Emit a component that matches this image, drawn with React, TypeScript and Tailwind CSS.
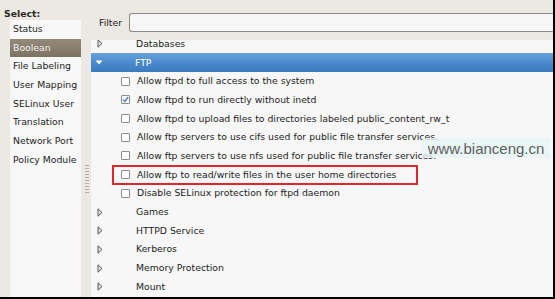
import React from 'react';

const pages = [
  'Status',
  'Boolean',
  'File Labeling',
  'User Mapping',
  'SELinux User',
  'Translation',
  'Network Port',
  'Policy Module',
];

type Row =
  | { kind: 'group'; label: string; open?: boolean; selected?: boolean }
  | { kind: 'bool'; label: string; checked?: boolean; marked?: boolean };

const rows: Row[] = [
  { kind: 'group', label: 'Databases' },
  { kind: 'group', label: 'FTP', open: true, selected: true },
  { kind: 'bool', label: 'Allow ftpd to full access to the system' },
  { kind: 'bool', label: 'Allow ftpd to run directly without inetd', checked: true },
  { kind: 'bool', label: 'Allow ftpd to upload files to directories labeled public_content_rw_t' },
  { kind: 'bool', label: 'Allow ftp servers to use cifs used for public file transfer services.' },
  { kind: 'bool', label: 'Allow ftp servers to use nfs used for public file transfer services.' },
  { kind: 'bool', label: 'Allow ftp to read/write files in the user home directories', marked: true },
  { kind: 'bool', label: 'Disable SELinux protection for ftpd daemon' },
  { kind: 'group', label: 'Games' },
  { kind: 'group', label: 'HTTPD Service' },
  { kind: 'group', label: 'Kerberos' },
  { kind: 'group', label: 'Memory Protection' },
  { kind: 'group', label: 'Mount' },
];

const Expander = ({ open }: { open?: boolean }) =>
  open ? (
    <svg width="8" height="5" viewBox="0 0 8 5">
      <polygon points="0.5,0.5 7.5,0.5 4,4.5" fill="#ffffff" />
    </svg>
  ) : (
    <svg width="6" height="9" viewBox="0 0 6 9">
      <polygon points="1,0.8 5,4.5 1,8.2" fill="#e4e2de" stroke="#5a5a5a" strokeWidth="1" />
    </svg>
  );

const Checkbox = ({ checked }: { checked?: boolean }) => (
  <div className="w-[9px] h-[9px] border border-[#8c8c8c] bg-white rounded-[1px] flex items-center justify-center">
    {checked && (
      <svg width="7" height="7" viewBox="0 0 7 7">
        <path d="M1 3.6 L2.8 5.5 L6.2 1" fill="none" stroke="#3a7fd3" strokeWidth="1.3" />
      </svg>
    )}
  </div>
);

const TreeRow = ({ row }: { row: Row }) => {
  if (row.kind === 'group') {
    return (
      <div
        className={`relative h-[18.7px] flex items-center ${
          row.selected ? 'bg-gradient-to-b from-[#68a2da] via-[#4b8bcc] to-[#3b7abd] text-white' : 'text-[#1c1c1c]'
        }`}
      >
        <div className={`w-[12px] flex justify-center ${row.open ? 'ml-[2px]' : 'ml-[3px]'}`}>
          <Expander open={row.open} />
        </div>
        <span className="ml-[30px] whitespace-nowrap">{row.label}</span>
      </div>
    );
  }
  return (
    <div className="relative h-[18.7px] flex items-center text-[#1c1c1c]">
      <div className="ml-[30px]">
        <Checkbox checked={row.checked} />
      </div>
      <span className="ml-[7px] whitespace-nowrap">{row.label}</span>
      {row.marked && (
        <div className="absolute left-[21px] top-[0px] w-[306px] h-[20px] border-2 border-[#e2262c]" />
      )}
    </div>
  );
};

export default function App() {
  return (
    <div className="relative w-[555px] h-[299px] overflow-hidden bg-[#ece8e2] border-r-2 border-b-2 border-black font-['DejaVu_Sans',sans-serif] text-[9.3px]">
      <div className="flex h-full">
        <div className="w-[81px] flex flex-col shrink-0">
          <div className="h-[20px] pl-[4px] pt-[8px] leading-[11px] font-bold text-[#2a2a2a]">Select:</div>
          <div className="ml-[10px] flex-1 bg-[#f8f8f8]">
            {pages.map((p) => (
              <div
                key={p}
                className={`h-[18.7px] leading-[18.7px] pl-[3px] whitespace-nowrap ${
                  p === 'Boolean' ? 'bg-gradient-to-b from-[#948b7c] to-[#7b7262] text-[#f3f1ec]' : 'text-[#1c1c1c]'
                }`}
              >
                {p}
              </div>
            ))}
          </div>
        </div>

        <div className="w-[10px] shrink-0 flex flex-col items-center pt-[165px]">
          <div className="flex flex-col gap-[2px] ml-[2px]">
            {Array.from({ length: 10 }).map((_, i) => (
              <div key={i} className="w-[4px] h-px bg-[#b3ada2]" />
            ))}
          </div>
        </div>

        <div className="flex-1 flex flex-col min-w-0">
          <div className="h-[40px] flex items-start pt-[13px]">
            <span className="ml-[8px] w-[30px] h-[19px] leading-[19px] text-[#1c1c1c]">Filter</span>
            <div className="flex-1 h-[19px] border border-r-0 border-[#8f8b84] rounded-l-[3px] bg-[#f6f6f6]" />
          </div>
          <div className="flex-1 bg-[#f7f7f7] overflow-hidden">
            <div className="mt-[-5.5px]">
              {rows.map((r) => (
                <TreeRow key={r.label} row={r} />
              ))}
            </div>
          </div>
        </div>
      </div>

      <div className="absolute left-[422px] top-[138px] w-[128px] h-[20px] bg-[#e6f4f4]/80 flex items-center justify-center font-['Liberation_Sans',sans-serif] text-[15px] text-[#5e5e5e] leading-none">
        www.bianceng.cn
      </div>
    </div>
  );
}
